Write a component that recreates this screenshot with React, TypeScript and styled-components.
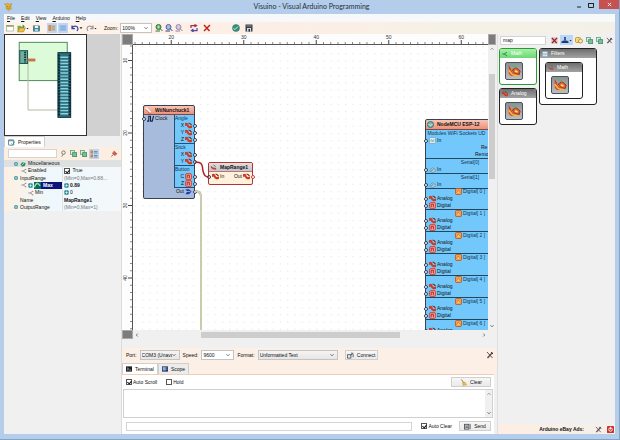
import React, { useEffect, useRef, useState } from "react";
import styled, { createGlobalStyle, css } from "styled-components";

const Global = createGlobalStyle`
  * { box-sizing: border-box; }
  body { margin: 0; font-family: "Liberation Sans", Arial, sans-serif; font-size: 5px; line-height: 7px; color: #111; }
  button, input, select, textarea { font: inherit; color: inherit; margin: 0; padding: 0; border-radius: 0; }
`;

/* ---------- icons ---------- */

const shapes: Record<string, React.ReactNode> = {
  app: (
    <>
      <path d="M1 3 L4 4 L6 2 L9 4 L14 3 L12 7 L13 12 L8 15 L4 12 L4 7 Z" fill="#e9b52d" stroke="#a8882e" />
      <path d="M5 8h2M9 8h2M6 11h4" stroke="#7b5a12" />
    </>
  ),
  new: (
    <>
      <rect x="1" y="3" width="14" height="11" fill="#fff" stroke="#71917e" />
      <path d="M1 4h14" stroke="#8aa356" strokeWidth="3" />
    </>
  ),
  open: (
    <>
      <path d="M1 13V3h5l2 2h5v8z" fill="#7fae3f" />
      <path d="M1 14l4-7h10l-4 7z" fill="#f0c14a" stroke="#9b7d2a" />
      <path d="M10 1l4 3-4 3z" fill="#2f9b3a" />
    </>
  ),
  save: (
    <>
      <rect x="1" y="2" width="14" height="12" fill="#2c7d94" stroke="#174f66" />
      <rect x="4" y="2" width="8" height="5" fill="#e9f5f7" />
      <rect x="4" y="9" width="8" height="5" fill="#a9d6dd" />
    </>
  ),
  panelA: (
    <>
      <rect x="1" y="2" width="14" height="12" fill="#c9b9a0" />
      <rect x="1" y="2" width="5" height="12" fill="#d58b4c" />
      <path d="M8 5h6M8 8h6M8 11h6" stroke="#8e97a8" />
    </>
  ),
  panelB: (
    <>
      <rect x="1" y="2" width="14" height="12" fill="#9dc0e8" />
      <path d="M3 5h10M3 8h10M3 11h10" stroke="#7e9fc8" />
    </>
  ),
  undo: <path d="M2 3v6h6M2 8c3-5 11-5 12 1 0 2-1 3-2 5" fill="none" stroke="#3648a8" strokeWidth="2.5" />,
  redo: <path d="M14 3v6H8M14 8C11 3 3 3 2 9c0 2 1 3 2 5" fill="none" stroke="#a29aa0" strokeWidth="2.5" />,
  zoomIn: (
    <>
      <circle cx="7" cy="6" r="5" fill="#64b368" stroke="#2e7d3b" strokeWidth="2" />
      <path d="M4 6h6M7 3v6" stroke="#fff" />
      <path d="M1 14h9M10 9l5 5" stroke="#3a6d3f" strokeWidth="2" />
    </>
  ),
  zoomOut: (
    <>
      <circle cx="7" cy="6" r="5" fill="#a8bde0" stroke="#4a62a6" strokeWidth="2" />
      <path d="M1 14h9M10 9l5 5" stroke="#30426f" strokeWidth="2" />
    </>
  ),
  zoomFit: (
    <>
      <circle cx="7" cy="6" r="5" fill="#d8c7e0" stroke="#9a86ae" strokeWidth="2" />
      <path d="M1 14h9M10 9l5 5" stroke="#8d7f9c" strokeWidth="2" />
    </>
  ),
  refresh: (
    <>
      <path d="M2 8V3h10M9 1l4 2-4 3" fill="none" stroke="#a2324c" strokeWidth="2.5" />
      <path d="M14 8v5H4M7 10l-4 3 4 3" fill="none" stroke="#574a9b" strokeWidth="2.5" />
    </>
  ),
  cross: <path d="M2 2l11 12M14 2L2 14" stroke="#c0241f" strokeWidth="3" />,
  globe: (
    <>
      <circle cx="8" cy="8" r="7" fill="#36917f" stroke="#1f6a6f" />
      <path d="M3 9l3 2 6-6" fill="none" stroke="#c9f0d7" strokeWidth="2" />
    </>
  ),
  board: (
    <>
      <rect x="1" y="1" width="14" height="14" fill="#39404a" />
      <rect x="4" y="8" width="8" height="7" fill="#d5d8dc" />
      <path d="M3 4h10" stroke="#8d949c" strokeWidth="2" />
      <rect x="7" y="10" width="3" height="5" fill="#2a2d33" />
    </>
  ),
  props: (
    <>
      <rect x="1" y="2" width="12" height="12" rx="1" fill="#fff" stroke="#3f7c9a" strokeWidth="2" />
      <path d="M1 4h12" stroke="#3f7c9a" strokeWidth="2" />
      <path d="M8 10l3 3 4-7" fill="none" stroke="#3a9155" strokeWidth="2" />
    </>
  ),
  filter: (
    <>
      <circle cx="8" cy="6" r="4" fill="#eef2ee" stroke="#68706c" strokeWidth="2" />
      <path d="M7 10l-3 5" stroke="#68706c" strokeWidth="2" />
    </>
  ),
  expand: (
    <>
      <rect x="1" y="1" width="9" height="9" fill="#d9efdc" stroke="#65a77e" strokeWidth="2" />
      <rect x="6" y="6" width="9" height="9" fill="#7cc28c" stroke="#4a8c7b" strokeWidth="2" />
    </>
  ),
  folder: (
    <>
      <rect x="1" y="3" width="10" height="10" rx="2" fill="#f5da7e" stroke="#c69d2c" strokeWidth="2" />
      <circle cx="11" cy="10" r="4" fill="#faedbd" stroke="#b8903a" strokeWidth="2" />
    </>
  ),
  category: (
    <>
      <rect x="1" y="1" width="5" height="6" fill="#c98348" />
      <rect x="1" y="9" width="5" height="6" fill="#c98348" />
      <path d="M8 3h7M8 6h7M8 11h7M8 14h7" stroke="#64748b" strokeWidth="1.5" />
    </>
  ),
  pin: (
    <>
      <path d="M7 2l7 7-3 1-2 3-6-6 3-2z" fill="#d45a50" stroke="#a93630" />
      <path d="M5 10l-4 5" stroke="#8a5550" strokeWidth="2" />
    </>
  ),
  tools: (
    <>
      <path d="M3 14L13 3" stroke="#4f5763" strokeWidth="3" />
      <path d="M2 2l11 12" stroke="#8a4047" strokeWidth="2" />
      <path d="M10 2l4 4" stroke="#39404a" strokeWidth="2" />
    </>
  ),
  person: (
    <>
      <path d="M1 14h14v-3l-4-2H5l-4 2z" fill="#223a72" />
      <path d="M6 2h4v7H6z" fill="#3d5d9a" />
    </>
  ),
  clearX: (
    <>
      <rect x="1" y="1" width="14" height="14" fill="#d3c2c2" />
      <path d="M2 2l11 12M14 2L2 14" stroke="#9e1a22" strokeWidth="3" />
    </>
  ),
  power: (
    <>
      <rect x="0" y="0" width="16" height="16" rx="2" fill="#c9352c" />
      <circle cx="8" cy="8" r="4" fill="none" stroke="#fff" strokeWidth="2" />
      <path d="M8 2v6" stroke="#fff" strokeWidth="2" />
    </>
  ),
  node: (
    <>
      <rect x="1" y="1" width="14" height="14" rx="3" fill="#2f8f9f" />
      <path d="M4 8h8M8 4v8" stroke="#fff" strokeWidth="2" />
    </>
  ),
  branch: <path d="M1 8h5M13 3L6 8l7 5M13 3v2M13 12v2" fill="none" stroke="#7d6f75" strokeWidth="2" />,
  globeSmall: (
    <>
      <path d="M1 9l5-6 9 2-2 8-8 2z" fill="#2d8f5e" />
      <path d="M4 12l7-7" stroke="#c8e6cf" strokeWidth="2" />
    </>
  ),
  mathMark: <path d="M1 8h5M13 3L6 8l7 5" fill="none" stroke="#2c7d3a" strokeWidth="2.5" />,
  wave: (
    <>
      <rect width="16" height="16" fill="#0a6a60" />
      <path d="M1 12C5 0 10 2 14 9" fill="none" stroke="#8fe3a7" strokeWidth="3" />
    </>
  ),
  analog: (
    <>
      <path d="M0 3c4-3 7 0 8 3s4 4 8 2v5c-5 3-9 0-11-3S2 8 0 9z" fill="#cf3a20" />
      <path d="M8 2l4 2 3 3" stroke="#7c2a14" strokeWidth="2.5" fill="none" />
    </>
  ),
  digital: (
    <>
      <rect x="1" y="1" width="14" height="14" rx="4" fill="#f29a8e" stroke="#cc3a32" strokeWidth="2" />
      <path d="M5 12V5h5v7" fill="none" stroke="#a8201c" strokeWidth="2" />
    </>
  ),
  digitalPin: (
    <>
      <rect x="1" y="1" width="14" height="14" rx="3" fill="#f2a14d" stroke="#b8562c" strokeWidth="2" />
      <path d="M4 11l3-6 5 6" fill="#ffe17d" stroke="#b53b22" />
    </>
  ),
  pulse: <path d="M0 14h4V3h4v11h4l3-12" fill="none" stroke="#17224c" strokeWidth="2.5" />,
  doc: (
    <>
      <rect x="1" y="1" width="14" height="14" rx="2" fill="#d9edf5" stroke="#7fa5b5" strokeWidth="2" />
      <path d="M5 11V5M8 11V7M11 11V5" stroke="#6d93a6" strokeWidth="1.5" />
    </>
  ),
  serial: (
    <>
      <path d="M1 12L7 4l5 2 3 5-6 4z" fill="#b7d6df" stroke="#6d93a6" strokeWidth="2" />
      <path d="M5 11l5-3" stroke="#4b7487" strokeWidth="2" />
    </>
  ),
  outBus: (
    <>
      <path d="M1 3h8l6 5-6 6H1l4-6z" fill="#1e3fae" />
      <path d="M3 8h9" stroke="#9db8f5" strokeWidth="2" />
    </>
  ),
  nunchuck: (
    <>
      <path d="M2 2l11 11" stroke="#fff" strokeWidth="4" />
      <path d="M2 5l8 9M8 14h6" stroke="#b5533c" strokeWidth="1.5" />
    </>
  ),
  esp: (
    <>
      <circle cx="8" cy="8" r="7" fill="#6fb7b0" stroke="#2d7470" strokeWidth="2" />
      <path d="M4 7l4 4 4-4" fill="none" stroke="#e8fbf8" strokeWidth="2" />
    </>
  ),
  map: (
    <>
      <path d="M2 4l5 4 7 1v4l-8-1-4-4z" fill="#b4483c" />
      <path d="M8 2l5 4" stroke="#5b5f66" strokeWidth="2" />
    </>
  ),
  terminal: (
    <>
      <rect x="0" y="1" width="16" height="14" fill="#1d2226" />
      <path d="M3 5l4 3-4 3M9 11h4" fill="none" stroke="#cfd6da" strokeWidth="2" />
    </>
  ),
  scope: (
    <>
      <rect x="0" y="1" width="16" height="14" fill="#22375f" />
      <rect x="2" y="3" width="8" height="9" fill="#8fb2dd" />
      <path d="M12 5h2M12 9h2" stroke="#dce6f3" strokeWidth="2" />
    </>
  ),
  connect: (
    <>
      <path d="M1 14V6h8v8z" fill="#e3e6e8" stroke="#4f565c" strokeWidth="2" />
      <path d="M8 8l6-6M11 1v5M14 4v8" stroke="#4f565c" strokeWidth="2" />
    </>
  ),
  broom: (
    <>
      <path d="M3 1l6 8" stroke="#9a6a22" strokeWidth="2" />
      <path d="M6 8l5-1 4 6-8 2z" fill="#eec33c" stroke="#b68a1c" />
    </>
  ),
  send: (
    <>
      <rect x="1" y="3" width="10" height="11" fill="#dfe2e5" stroke="#4d5359" strokeWidth="2" />
      <path d="M3 7h6M3 10h6M14 2v12" stroke="#4d5359" strokeWidth="2" />
    </>
  ),
  caret: <path d="M2 5h12l-6 7z" fill="#222" />,
  chevDown: <path d="M2 5l6 6 6-6" fill="none" stroke="#444" strokeWidth="3" />,
  chevUp: <path d="M2 11l6-6 6 6" fill="none" stroke="#777" strokeWidth="3" />,
  chevLeft: <path d="M11 2L5 8l6 6" fill="none" stroke="#555" strokeWidth="3" />,
  chevRight: <path d="M5 2l6 6-6 6" fill="none" stroke="#555" strokeWidth="3" />,
  mapTile: (
    <>
      <path d="M2 1c2 3 3 6 4 8l4 4c-4 2-8 0-8-4z" fill="#d93a1e" />
      <path d="M2 7l4 5 7 2" fill="none" stroke="#f7b733" strokeWidth="2" />
      <path d="M6 7l4-3 5 4-1 4-5-1z" fill="#e9622a" stroke="#8f2b17" />
      <path d="M9 8l3 1" stroke="#ffe07a" strokeWidth="2" />
      <path d="M5 1l6 3" stroke="#63b06c" strokeWidth="1.5" />
    </>
  ),
};

const Svg = styled.svg<{ $s: number }>`
  flex: none;
  display: block;
  width: ${(p) => p.$s}px;
  height: ${(p) => p.$s}px;
`;
const Icon = ({ name, size = 8 }: { name: string; size?: number }) => (
  <Svg $s={size} viewBox="0 0 16 16" aria-hidden="true">
    {shapes[name]}
  </Svg>
);

/* ---------- window frame ---------- */

const Window = styled.div`
  display: grid;
  grid-template-rows: 14px 8px 12px minmax(0, 1fr);
  min-height: 100vh;
  padding: 0 4px 5px;
  background: #b3cdea;
  border: solid #86a3c4;
  border-width: 0 1px 1px 0;
`;
const TitleBar = styled.header`
  display: grid;
  grid-template-columns: 1fr auto 1fr;
  margin-right: -4px;
`;
const TitleIcon = styled.div`
  padding-top: 2px;
`;
const Title = styled.h1`
  margin: 0;
  font: 400 7px/13px Lato, sans-serif;
  color: #26303c;
`;
const Controls = styled.div`
  display: flex;
  justify-content: flex-end;
  align-items: flex-start;
  gap: 5px;
`;
const WinButton = styled.button<{ $close?: boolean }>`
  display: flex;
  align-items: center;
  justify-content: center;
  width: ${(p) => (p.$close ? 20 : 7)}px;
  height: 9px;
  border: 0;
  background: ${(p) => (p.$close ? "#c75050" : "transparent")};
`;
const MenuBar = styled.nav`
  display: flex;
  align-items: center;
  gap: 6px;
  padding-left: 3px;
  background: #f6f8fa;
`;
const MenuItem = styled.button`
  border: 0;
  background: none;
  line-height: 7px;
`;
const Accel = styled.u`
  text-decoration-thickness: 1px;
`;

/* ---------- toolbar ---------- */

const Toolbar = styled.div`
  display: flex;
  align-items: center;
  gap: 3px;
  padding-left: 2px;
  background: linear-gradient(90deg, #fff3e9 0%, #fdeee5 45%, #f5f1e6 75%, #f3f0e8 100%);
`;
const Tool = styled.button<{ $on?: boolean }>`
  display: flex;
  align-items: center;
  justify-content: center;
  min-width: 8px;
  height: 10px;
  border: 0;
  background: ${(p) => (p.$on ? "#bcd6f5" : "none")};
  ${(p) => p.$on && css`padding: 0 1px;`}
`;
const ToolGroup = styled.div<{ $gap?: number; $before?: number }>`
  display: flex;
  align-items: center;
  gap: ${(p) => p.$gap ?? 0}px;
  margin-left: ${(p) => p.$before ?? 0}px;
`;

const SelectBox = styled.span<{ $w: number; $white?: boolean }>`
  display: grid;
  grid-template-columns: minmax(0, 1fr) 7px;
  align-items: center;
  width: ${(p) => p.$w}px;
  height: 10px;
  border: 1px solid #c4c4c4;
  background: ${(p) => (p.$white ? "#fff" : "linear-gradient(#f4f4f4, #e6e6e6)")};
`;
const NativeSelect = styled.select`
  appearance: none;
  width: 100%;
  height: 8px;
  border: 0;
  padding-left: 1px;
  background: transparent;
  line-height: 8px;
`;
const Select = ({ id, value, w, white }: { id: string; value: string; w: number; white?: boolean }) => (
  <SelectBox $w={w} $white={white}>
    <NativeSelect id={id} defaultValue={value}>
      <option>{value}</option>
    </NativeSelect>
    <Icon name="chevDown" size={4} />
  </SelectBox>
);

/* ---------- body columns ---------- */

const Body = styled.div`
  display: grid;
  grid-template-columns: 118px minmax(0, 1fr) 117px;
  background: #f0f0f0;
`;
const LeftColumn = styled.aside`
  display: flex;
  flex-direction: column;
  border-right: 1px solid #dcdcdc;
  min-width: 0;
`;
const OverviewRow = styled.div`
  display: grid;
  grid-template-columns: 83px 1fr;
  height: 102px;
  margin-right: 1px;
  background: #d1d1d1;
`;
const Overview = styled.svg`
  width: 100%;
  height: 102px;
  background: #fff;
  border: 1px solid #333;
`;

const TabRow = styled.div`
  display: flex;
  align-items: flex-end;
  height: 11px;
`;
const Tab = styled.button<{ $active?: boolean }>`
  display: flex;
  align-items: center;
  gap: 3px;
  height: 11px;
  padding: 0 3px;
  border: 1px solid #d3d0cc;
  border-bottom: 0;
  background: ${(p) => (p.$active ? "#fff" : "#ececec")};
`;
const FilterBar = styled.div`
  display: flex;
  align-items: center;
  gap: 2px;
  height: 13px;
  padding: 1px 3px 1px 4px;
  background: #fdeee2;
`;
const TextInput = styled.input<{ $w?: number }>`
  ${(p) => (p.$w ? `width: ${p.$w}px;` : "flex: 1;")}
  min-width: 0;
  height: 9px;
  padding-left: 2px;
  border: 1px solid #d4d4d4;
  background: #fff;
`;
const Spacer = styled.div`
  flex: 1;
`;

const Props = styled.table`
  width: 100%;
  height: 51px;
  table-layout: fixed;
  border-collapse: collapse;
  background: linear-gradient(90deg, #fdf0e2, #eef8fc 40%, #f4f8fa);
`;
const NameCell = styled.th<{ $depth: number; $head?: boolean; $sel?: boolean }>`
  width: 68px;
  padding: 0 0 0 ${(p) => p.$depth}px;
  font-weight: 400;
  text-align: left;
  ${(p) => p.$head && "background: #dfe1e1;"}
  ${(p) => p.$sel && "color: #fff; font-weight: 700;"}
`;
const ValueCell = styled.td<{ $bold?: boolean; $muted?: boolean }>`
  padding: 0 0 0 1px;
  border-left: 1px solid #e1e1e1;
  white-space: nowrap;
  overflow: hidden;
  font-weight: ${(p) => (p.$bold ? 700 : 400)};
  color: ${(p) => (p.$muted ? "#777" : "#111")};
`;
const Inline = styled.span<{ $gap?: number; $sel?: boolean }>`
  display: flex;
  align-items: center;
  gap: ${(p) => p.$gap ?? 2}px;
  height: 7px;
  ${(p) => p.$sel && "flex: 1; background: #0c1478;"}
`;

const CheckInput = styled.input`
  appearance: none;
  position: relative;
  flex: none;
  width: 6px;
  height: 6px;
  border: 1px solid #555;
  background: #fff;
  &:checked::after {
    content: "";
    position: absolute;
    left: 1px;
    top: 0;
    width: 2px;
    height: 3px;
    border: solid #111;
    border-width: 0 1px 1px 0;
    transform: rotate(40deg);
  }
`;
const CheckLabel = styled.label`
  display: flex;
  align-items: center;
  gap: 1px;
  white-space: nowrap;
`;

/* ---------- designer ---------- */

const Center = styled.main`
  display: grid;
  grid-template-rows: minmax(0, 1fr) 95px;
  min-width: 0;
  border-right: 1px solid #dedede;
`;
const Designer = styled.section`
  display: grid;
  grid-template-columns: 11px minmax(0, 1fr) 8px;
  grid-template-rows: 11px minmax(0, 1fr) 9px;
  padding-right: 1px;
`;
const Corner = styled.div`
  background: #7c7c7c;
  border: 1px solid #a9a9a9;
`;
const RulerBox = styled.div`
  display: grid;
  min-width: 0;
  min-height: 0;
  overflow: hidden;
  background: #fdfdfd;
`;
const RulerSvg = styled.svg`
  display: block;
  width: 100%;
  height: 100%;
`;
const Canvas = styled.div`
  position: relative;
  overflow: hidden;
  background: #fff;
`;
const Wires = styled.svg`
  position: absolute;
  inset: 0;
  width: 100%;
  height: 100%;
`;
const VScroll = styled.div`
  display: grid;
  grid-template-rows: 8px 21px 105px 1fr 8px;
  justify-items: center;
  align-items: center;
  background: #f0f0f0;
`;
const HScroll = styled.div`
  display: grid;
  grid-template-columns: 8px 60px minmax(0, 199fr) minmax(0, 80fr) 8px;
  align-items: center;
  justify-items: center;
  background: #f0f0f0;
`;
const VThumb = styled.div`
  grid-row: 3;
  width: 6px;
  height: 100%;
  background: #cdcdcd;
`;
const HThumb = styled.div`
  grid-column: 3;
  width: 100%;
  height: 6px;
  background: #cdcdcd;
`;
const ScrollEnd = styled.span<{ $col?: boolean }>`
  ${(p) => (p.$col ? "grid-column: 5;" : "grid-row: 5;")}
`;

const Node = styled.article<{ $x: number; $y: number; $w: number; $tone: "grey" | "sky" | "cream" }>`
  position: absolute;
  left: ${(p) => p.$x}px;
  top: ${(p) => p.$y}px;
  width: ${(p) => p.$w}px;
  border: 1px solid ${(p) => (p.$tone === "cream" ? "#b3352f" : "#3a4250")};
  border-radius: 2px;
  background: ${(p) => ({ grey: "#a7bcdc", sky: "#72c8fb", cream: "#fff1dc" })[p.$tone]};
`;
const NodeHead = styled.h2<{ $cool?: boolean; $h: number }>`
  display: flex;
  align-items: center;
  gap: 3px;
  height: ${(p) => p.$h}px;
  margin: 0;
  padding: 0 1px;
  font-size: 5px;
  line-height: 7px;
  border-bottom: 1px solid ${(p) => (p.$cool ? "#c2746a" : "#7b4a44")};
  border-radius: 2px 2px 0 0;
  white-space: nowrap;
  background: ${(p) => (p.$cool ? "linear-gradient(#e8dcd8, #bcc6d2)" : "linear-gradient(#f9c5b6, #ee9079)")};
`;
const Pin = styled.i<{ $red?: boolean }>`
  flex: none;
  width: 4px;
  height: 4px;
  border: 1px solid ${(p) => (p.$red ? "#c8443c" : "#27405c")};
  border-radius: 2px;
  background: #fff;
`;
const PinRow = styled.div<{ $side: "left" | "right" }>`
  display: flex;
  align-items: center;
  justify-content: ${(p) => (p.$side === "left" ? "flex-start" : "flex-end")};
  gap: 1px;
  height: 7px;
  ${(p) => (p.$side === "left" ? "margin-left: -2px;" : "margin-right: -3px;")}
`;
const NunBody = styled.div`
  display: grid;
  grid-template-columns: 1fr 20px;
  height: 83px;
`;
const Ports = styled.div`
  height: 100%;
`;
const PortBox = styled.div`
  border: solid #234f78;
  border-width: 0 0 1px 1px;
  background: #72c8fb;
`;
const PortTitle = styled.div<{ $center?: boolean }>`
  display: flex;
  align-items: center;
  justify-content: ${(p) => (p.$center ? "center" : "flex-start")};
  gap: 1px;
  height: 7px;
  color: #17324e;
  white-space: nowrap;
`;
const MapBody = styled.div`
  display: flex;
  justify-content: space-between;
  padding: 1px 0 4px;
`;
const Section = styled.div`
  border-bottom: 1px solid #24465f;
`;
const SectionStack = styled.div<{ $h: number }>`
  display: grid;
  grid-auto-rows: 1fr;
  height: ${(p) => p.$h}px;
`;
const ModuleRight = styled.div<{ $indent: number }>`
  padding-left: ${(p) => p.$indent}px;
  height: 7px;
  white-space: nowrap;
`;

const Port = ({ label, icon }: { label: string; icon: string }) => (
  <PinRow $side="right">
    <span>{label}</span>
    <Icon name={icon} size={7} />
    <Pin />
  </PinRow>
);
const InPort = ({ label, icon }: { label: string; icon: string }) => (
  <PinRow $side="left">
    <Pin />
    <Icon name={icon} size={7} />
    <span>{label}</span>
  </PinRow>
);

const STEP = 7.25;

/* Draws only as many ticks as fit in its box. */
const Ruler = ({ vertical, start, phase, first }: { vertical?: boolean; start: number; phase: number; first: number }) => {
  const box = useRef<HTMLDivElement>(null);
  const [length, setLength] = useState(0);
  useEffect(() => {
    const el = box.current;
    if (!el) return;
    const measure = () => setLength(vertical ? el.clientHeight : el.clientWidth);
    measure();
    const watcher = new ResizeObserver(measure);
    watcher.observe(el);
    return () => watcher.disconnect();
  }, [vertical]);
  const count = Math.max(0, Math.floor((length - start - 1) / STEP) + 1);
  return (
    <RulerBox ref={box}>
      <RulerSvg>
        {Array.from({ length: count }, (_, i) => {
          const at = start + i * STEP;
          const major = i % 10 === phase;
          const from = major ? 6 : 8;
          return (
            <g key={i}>
              <path d={vertical ? `M${from} ${at}H11` : `M${at} ${from}V11`} stroke={major ? "#444" : "#888"} />
              {major && (
                <text
                  transform={vertical ? `translate(5 ${at}) rotate(-90)` : `translate(${at} 5)`}
                  fontSize="5"
                  textAnchor="middle"
                  fill="#333"
                >
                  {first + i - phase}
                </text>
              )}
            </g>
          );
        })}
        <path d={vertical ? `M10.5 0V${length}` : `M0 10.5H${length}`} stroke="#555" />
      </RulerSvg>
    </RulerBox>
  );
};

/* ---------- terminal ---------- */

const Lower = styled.section`
  display: grid;
  grid-template-rows: 14px 12px minmax(0, 1fr);
  padding-top: 9px;
  background: #f0f0f0;
`;
const PortBar = styled.div`
  display: flex;
  align-items: center;
  gap: 3px;
  padding: 0 3px 0 4px;
  background: #fcefe6;
`;
const SerialTabs = styled.div`
  display: flex;
  align-items: flex-end;
  background: #fcefe6;
`;
const Panel = styled.div`
  display: grid;
  grid-template-rows: 14px minmax(0, 1fr) 16px;
  margin-right: 3px;
  border-top: 1px solid #f0cfba;
  background: #fff;
`;
const PanelRow = styled.div`
  display: flex;
  align-items: center;
  gap: 9px;
  padding: 0 3px 0 4px;
`;
const Button = styled.button<{ $w: number }>`
  display: flex;
  align-items: center;
  justify-content: center;
  gap: 3px;
  width: ${(p) => p.$w}px;
  height: 10px;
  border: 1px solid #cfcfcf;
  background: linear-gradient(#f7f7f7, #eaeaea);
`;
const OutputBox = styled.div`
  display: grid;
  grid-template-columns: minmax(0, 1fr) 7px;
  margin: 0 1px;
  border: 1px solid #d0d0d0;
`;
const Output = styled.textarea`
  resize: none;
  border: 0;
  width: 100%;
  height: 100%;
  background: #fff;
`;
const MiniScroll = styled.div`
  display: flex;
  flex-direction: column;
  align-items: center;
  justify-content: space-between;
  padding: 2px 0;
  background: #f0f0f0;
`;

/* ---------- component palette ---------- */

const RightColumn = styled.aside`
  display: flex;
  flex-direction: column;
  justify-content: space-between;
  min-width: 0;
`;
const SearchRow = styled.div`
  display: flex;
  align-items: center;
  gap: 2px;
  height: 12px;
  padding: 0 2px;
`;
const Palette = styled.div`
  display: flex;
  align-items: flex-start;
  gap: 2px;
  padding: 2px 1px;
`;
const Column = styled.div`
  display: grid;
  gap: 3px;
`;
const Card = styled.section<{ $green?: boolean; $big?: boolean }>`
  width: ${(p) => (p.$big ? 58 : 38)}px;
  height: ${(p) => (p.$big ? 57 : 37)}px;
  border: 1px solid ${(p) => (p.$green ? "#2c9a34" : "#222")};
  border-radius: 3px;
  overflow: hidden;
  background: #fff;
`;
const CardHead = styled.h3<{ $green?: boolean }>`
  display: flex;
  align-items: center;
  gap: 3px;
  height: 9px;
  margin: 0;
  padding: 0 2px;
  font-size: 5px;
  line-height: 7px;
  font-weight: 400;
  color: #fff;
  background: ${(p) => (p.$green ? "linear-gradient(#a8f0a8, #6bd873)" : "linear-gradient(#6e6e6e, #a2a2a2)")};
`;
const CardBody = styled.div`
  padding: 4px 5px;
`;
const Tile = styled.button`
  display: flex;
  align-items: center;
  justify-content: center;
  width: 18px;
  height: 18px;
  border: 1px solid #4c5358;
  border-radius: 2px;
  background: linear-gradient(#8b9296, #b9bec1);
`;
const AdBar = styled.footer`
  display: flex;
  align-items: center;
  justify-content: flex-end;
  gap: 4px;
  height: 10px;
  padding-right: 1px;
  font-weight: 700;
  background: linear-gradient(90deg, #fdeee4, #f4f0ea);
`;
const AdText = styled.span`
  margin-right: 6px;
`;

const PaletteCard = ({ label, icon, green }: { label: string; icon: string; green?: boolean }) => (
  <Card $green={green}>
    <CardHead $green={green}>
      <Icon name={icon} size={6} />
      {label}
    </CardHead>
    <CardBody>
      <Tile aria-label={`${label} component`}>
        <Icon name="mapTile" size={14} />
      </Tile>
    </CardBody>
  </Card>
);

export default function App() {
  return (
    <>
      <Global />
      <Window>
        <TitleBar>
          <TitleIcon>
            <Icon name="app" size={9} />
          </TitleIcon>
          <Title>Visuino - Visual Arduino Programming</Title>
          <Controls>
            <WinButton aria-label="Minimize">
              <Svg $s={6} viewBox="0 0 6 6"><path d="M1 5h4" stroke="#222" /></Svg>
            </WinButton>
            <WinButton aria-label="Maximize">
              <Svg $s={6} viewBox="0 0 6 6"><path d="M.5 1v4.5h5V1M0 1.5h6" fill="none" stroke="#222" /></Svg>
            </WinButton>
            <WinButton $close aria-label="Close">
              <Svg $s={5} viewBox="0 0 6 6"><path d="M1 1l4 4M5 1L1 5" stroke="#fff" /></Svg>
            </WinButton>
          </Controls>
        </TitleBar>

        <MenuBar>
          {["File", "Edit", "View", "Arduino", "Help"].map((m) => (
            <MenuItem key={m}>
              <Accel>{m[0]}</Accel>
              {m.slice(1)}
            </MenuItem>
          ))}
        </MenuBar>

        <Toolbar>
          <Tool aria-label="New"><Icon name="new" /></Tool>
          <Tool aria-label="Open"><Icon name="open" size={9} /><Icon name="caret" size={3} /></Tool>
          <Tool aria-label="Save"><Icon name="save" size={7} /></Tool>
          <ToolGroup $before={4} $gap={1}>
            <Tool $on aria-label="Show properties"><Icon name="panelA" /></Tool>
            <Tool $on aria-label="Show components"><Icon name="panelB" /></Tool>
          </ToolGroup>
          <Tool aria-label="Undo"><Icon name="undo" /><Icon name="caret" size={4} /></Tool>
          <Tool aria-label="Redo"><Icon name="redo" /><Icon name="caret" size={3} /></Tool>
          <ToolGroup $before={4} $gap={2}>
            <label htmlFor="zoom">Zoom:</label>
            <Select id="zoom" value="100%" w={32} white />
          </ToolGroup>
          <ToolGroup $gap={2}>
            <Tool aria-label="Zoom in"><Icon name="zoomIn" /></Tool>
            <Tool aria-label="Zoom out"><Icon name="zoomOut" /></Tool>
            <Tool aria-label="Zoom to fit"><Icon name="zoomFit" /></Tool>
          </ToolGroup>
          <ToolGroup $before={4} $gap={5}>
            <Tool aria-label="Replace"><Icon name="refresh" /></Tool>
            <Tool aria-label="Delete"><Icon name="cross" /></Tool>
          </ToolGroup>
          <ToolGroup $before={18} $gap={5}>
            <Tool aria-label="Build"><Icon name="globe" /></Tool>
            <Tool aria-label="Upload"><Icon name="board" /></Tool>
          </ToolGroup>
        </Toolbar>

        <Body>
          <LeftColumn>
            <OverviewRow>
              <Overview viewBox="0 0 82 102" preserveAspectRatio="xMinYMin meet">
                <rect x="14.5" y="7.5" width="49" height="39" fill="#dcfbd8" stroke="#4c8a5a" />
                <path d="M23.5 27v49.5h32" fill="none" stroke="#b5b5a0" />
                <rect x="15" y="16" width="8" height="13" fill="#6fae9c" stroke="#1b4a4c" />
                <path d="M20.5 17v11" stroke="#0f3236" strokeWidth="2" strokeDasharray="1.5 1" />
                <rect x="23" y="24" width="8" height="3" fill="#c87848" />
                <rect x="54" y="18" width="13" height="66" fill="#2a6f7c" stroke="#0c2f3a" />
                <path d="M60.5 22v60" stroke="#8fd0df" strokeWidth="8" strokeDasharray="1.5 1.7" />
                <path d="M55 20v62M66 20v62" stroke="#0a2833" strokeWidth="2" strokeDasharray="2 1" />
              </Overview>
            </OverviewRow>
            <TabRow>
              <Tab $active><Icon name="props" size={7} />Properties</Tab>
            </TabRow>
            <FilterBar>
              <TextInput $w={49} aria-label="Filter properties" />
              <Tool aria-label="Filter"><Icon name="filter" size={7} /></Tool>
              <Tool aria-label="Expand"><Icon name="expand" size={7} /></Tool>
              <Tool aria-label="Collapse"><Icon name="expand" size={7} /></Tool>
              <Tool $on aria-label="Categories"><Icon name="category" /></Tool>
              <Spacer />
              <Tool aria-label="Pin"><Icon name="pin" size={7} /></Tool>
            </FilterBar>
            <Props>
              <tbody>
                <tr>
                  <NameCell $depth={10} $head colSpan={2} scope="rowgroup">
                    <Inline><Icon name="node" size={4} /><Icon name="globeSmall" size={6} />Miscellaneous</Inline>
                  </NameCell>
                </tr>
                <tr>
                  <NameCell $depth={17} scope="row"><Inline $gap={1}><Icon name="branch" size={6} />Enabled</Inline></NameCell>
                  <ValueCell>
                    <CheckLabel><CheckInput type="checkbox" defaultChecked />&nbsp;True</CheckLabel>
                  </ValueCell>
                </tr>
                <tr>
                  <NameCell $depth={10} scope="row"><Inline><Icon name="node" size={4} />InputRange</Inline></NameCell>
                  <ValueCell $muted>(Min=0,Max=0.88...</ValueCell>
                </tr>
                <tr>
                  <NameCell $depth={17} $sel scope="row">
                    <Inline $gap={1}>
                      <Icon name="branch" size={6} />
                      <Icon name="node" size={5} />
                      <Inline $sel><Icon name="wave" size={7} />Max</Inline>
                    </Inline>
                  </NameCell>
                  <ValueCell $bold><Inline $gap={1}><Icon name="node" size={5} />0.89</Inline></ValueCell>
                </tr>
                <tr>
                  <NameCell $depth={24} scope="row"><Inline $gap={1}><Icon name="branch" size={6} />Min</Inline></NameCell>
                  <ValueCell><Inline $gap={1}><Icon name="node" size={5} />0</Inline></ValueCell>
                </tr>
                <tr>
                  <NameCell $depth={16} scope="row">Name</NameCell>
                  <ValueCell $bold>MapRange1</ValueCell>
                </tr>
                <tr>
                  <NameCell $depth={10} scope="row"><Inline><Icon name="node" size={4} />OutputRange</Inline></NameCell>
                  <ValueCell $muted>(Min=0,Max=1)</ValueCell>
                </tr>
              </tbody>
            </Props>
          </LeftColumn>

          <Center>
            <Designer>
              <Corner />
              <Ruler start={2} phase={5} first={20} />
              <Corner />
              <Ruler vertical start={1} phase={2} first={10} />
              <Canvas>
                <Wires>
                  <defs>
                    <pattern id="dots" width={STEP} height={STEP} patternUnits="userSpaceOnUse">
                      <rect x="2" y="1" width="1" height="1" fill="#dedede" />
                    </pattern>
                  </defs>
                  <rect width="100%" height="100%" fill="url(#dots)" />
                </Wires>
                <Node $x={10} $y={60} $w={52} $tone="grey">
                  <NodeHead $h={9}><Icon name="nunchuck" size={7} />WiiNunchuck1</NodeHead>
                  <NunBody>
                    <InPort label="Clock" icon="pulse" />
                    <Ports>
                      <PortBox>
                        <PortTitle>Angle</PortTitle>
                        <Port label="X" icon="analog" />
                        <Port label="Y" icon="analog" />
                        <Port label="Z" icon="analog" />
                      </PortBox>
                      <PortBox>
                        <PortTitle>Stick</PortTitle>
                        <Port label="X" icon="analog" />
                        <Port label="Y" icon="analog" />
                      </PortBox>
                      <PortBox>
                        <PortTitle>Button</PortTitle>
                        <Port label="C" icon="digital" />
                        <Port label="Z" icon="digital" />
                      </PortBox>
                      <Port label="Out" icon="outBus" />
                    </Ports>
                  </NunBody>
                </Node>
                <Node $x={75} $y={117} $w={45} $tone="cream">
                  <NodeHead $h={9} $cool><Icon name="map" size={7} />MapRange1</NodeHead>
                  <MapBody>
                    <InPort label="In" icon="analog" />
                    <PinRow $side="right">
                      <span>Out</span>
                      <Icon name="analog" size={7} />
                      <Pin $red />
                    </PinRow>
                  </MapBody>
                </Node>
                <Node $x={292} $y={74} $w={90} $tone="sky">
                  <NodeHead $h={10}><Icon name="esp" size={7} />NodeMCU ESP-12</NodeHead>
                  <Section>
                    <PortTitle>&nbsp;Modules WiFi Sockets UD</PortTitle>
                    <InPort label="In" icon="doc" />
                    <ModuleRight $indent={55}>Re</ModuleRight>
                    <ModuleRight $indent={49}>Remo</ModuleRight>
                  </Section>
                  <SectionStack $h={29}>
                    {[0, 1].map((n) => (
                      <Section key={n}>
                        <PortTitle $center>{`Serial[${n}]`}</PortTitle>
                        <InPort label="In" icon="serial" />
                      </Section>
                    ))}
                  </SectionStack>
                  <SectionStack $h={152}>
                    {[0, 1, 2, 3, 4, 5, 6].map((n) => (
                      <Section key={n}>
                        <PortTitle $center><Icon name="digitalPin" size={7} />{`Digital[ ${n} ]`}</PortTitle>
                        <InPort label="Analog" icon="analog" />
                        {n < 6 && <InPort label="Digital" icon="digital" />}
                      </Section>
                    ))}
                  </SectionStack>
                </Node>
                <Wires>
                  <path d="M62 117c9 0 7 5 8 9s2 6 6 6" fill="none" stroke="#b3202c" strokeWidth="1.5" />
                  <path d="M62 146c4 0 6 2 6 6V2000" fill="none" stroke="#a3a884" strokeWidth="2" />
                  <path d="M62 146c4 0 6 2 6 6V2000" fill="none" stroke="#eef0d4" strokeWidth="1" />
                </Wires>
              </Canvas>
              <VScroll>
                <Icon name="chevUp" size={4} />
                <VThumb />
                <ScrollEnd><Icon name="chevDown" size={4} /></ScrollEnd>
              </VScroll>
              <Corner />
              <HScroll>
                <Icon name="chevLeft" size={4} />
                <HThumb />
                <ScrollEnd $col><Icon name="chevRight" size={4} /></ScrollEnd>
              </HScroll>
            </Designer>

            <Lower>
              <PortBar>
                <label htmlFor="port">Port:</label>
                <Select id="port" value="COM3 (Unava" w={40} />
                <label htmlFor="speed">Speed:</label>
                <Select id="speed" value="9600" w={33} white />
                <label htmlFor="format">Format:</label>
                <Select id="format" value="Unformatted Text" w={80} />
                <ToolGroup $before={4}>
                  <Button $w={33}><Icon name="connect" size={7} />Connect</Button>
                </ToolGroup>
                <Spacer />
                <Tool aria-label="Serial settings"><Icon name="tools" /></Tool>
              </PortBar>
              <SerialTabs>
                <Tab $active><Icon name="terminal" size={6} />Terminal</Tab>
                <Tab><Icon name="scope" size={6} />Scope</Tab>
              </SerialTabs>
              <Panel>
                <PanelRow>
                  <CheckLabel><CheckInput type="checkbox" defaultChecked />Auto Scroll</CheckLabel>
                  <CheckLabel><CheckInput type="checkbox" />Hold</CheckLabel>
                  <Spacer />
                  <Button $w={40}><Icon name="broom" size={7} />Clear</Button>
                </PanelRow>
                <OutputBox>
                  <Output aria-label="Terminal output" />
                  <MiniScroll><Icon name="chevUp" size={4} /><Icon name="chevDown" size={4} /></MiniScroll>
                </OutputBox>
                <PanelRow>
                  <TextInput aria-label="Text to send" />
                  <ToolGroup $gap={7}>
                    <CheckLabel><CheckInput type="checkbox" defaultChecked />Auto Clear</CheckLabel>
                    <Button $w={32}><Icon name="send" size={7} />Send</Button>
                  </ToolGroup>
                </PanelRow>
              </Panel>
            </Lower>
          </Center>

          <RightColumn>
            <div>
              <SearchRow>
                <TextInput $w={51} defaultValue="map" aria-label="Search components" />
                <ToolGroup $before={2} $gap={2}>
                  <Tool aria-label="Clear search"><Icon name="clearX" size={7} /></Tool>
                  <Tool $on aria-label="Search options"><Icon name="person" /><Icon name="caret" size={3} /></Tool>
                  <Tool aria-label="Wizards"><Icon name="folder" /></Tool>
                  <Tool aria-label="Expand all"><Icon name="expand" size={7} /></Tool>
                  <Tool aria-label="Collapse all"><Icon name="expand" size={7} /></Tool>
                  <Tool aria-label="Customize"><Icon name="tools" size={7} /></Tool>
                </ToolGroup>
              </SearchRow>
              <Palette>
                <Column>
                  <PaletteCard label="Math" icon="mathMark" green />
                  <PaletteCard label="Analog" icon="analog" />
                </Column>
                <Card $big>
                  <CardHead><Icon name="doc" size={6} />Filters</CardHead>
                  <CardBody>
                    <PaletteCard label="Math" icon="map" />
                  </CardBody>
                </Card>
              </Palette>
            </div>
            <AdBar>
              <AdText>Arduino eBay Ads:</AdText>
              <Tool aria-label="Ad settings"><Icon name="tools" size={7} /></Tool>
              <Tool aria-label="Close ads"><Icon name="power" size={7} /></Tool>
            </AdBar>
          </RightColumn>
        </Body>
      </Window>
    </>
  );
}
